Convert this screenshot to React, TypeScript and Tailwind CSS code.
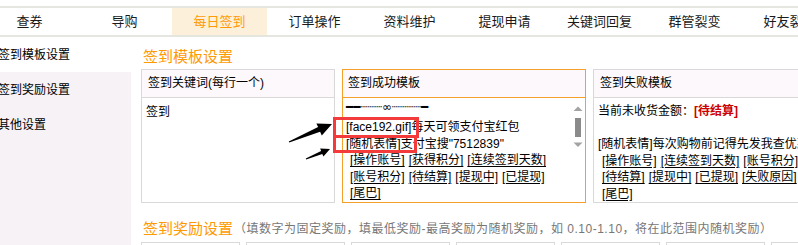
import React from 'react'

const tabs = ['查券', '导购', '每日签到', '订单操作', '资料维护', '提现申请', '关键词回复', '群管裂变', '好友裂变']
const sideItems = ['签到模板设置', '签到奖励设置', '其他设置']

function Tag({ children }: { children: React.ReactNode }) {
  return <span className="underline underline-offset-[2px] decoration-1">{children}</span>
}

// Textarea scrollbar drawing
function ScrollBar() {
  return (
    <svg className="absolute left-[229px] top-[6px]" width="12" height="46" viewBox="0 0 12 46">
      <polygon points="1.5,7 6,2.5 10.5,7" fill="#a3a3a3" />
      <rect x="3" y="14" width="6" height="19" fill="#8a8a8a" />
      <polygon points="1.5,38.5 6,43 10.5,38.5" fill="#a3a3a3" />
    </svg>
  )
}

// Black pointer arrows
function Arrows() {
  return (
    <svg className="absolute left-0 top-0 pointer-events-none" width="798" height="245" viewBox="0 0 798 245">
      <polygon
        points="288.8,141.5 318.1,127.1 316.4,123.4 332,124 321.8,135.4 320.1,131.7 289.2,142.6"
        fill="#000"
      />
      <polygon
        points="305.8,158.6 321.1,151.1 320.2,148.6 330,149 323.4,156.4 322.3,153.9 306.2,159.5"
        fill="#000"
      />
    </svg>
  )
}

export default function App() {
  return (
    <div className="relative w-[798px] h-[245px] overflow-hidden bg-white text-[12px] text-black font-['Liberation_Sans','Noto_Sans_CJK_SC',sans-serif]">
      {/* Top tabs */}
      <div className="mt-[6px] flex h-[31px] border-y-2 border-[#e6e6e1] -ml-[18px]">
        {tabs.map((t) => (
          <div
            key={t}
            className={
              t === '每日签到'
                ? 'w-[95px] shrink-0 flex items-center justify-center text-[13px] text-[#ff9a06] bg-[#fdf0da]'
                : 'w-[95px] shrink-0 flex items-center justify-center text-[13px] text-[#1a1a1a]'
            }
          >
            {t}
          </div>
        ))}
      </div>

      <div className="flex">
        {/* Sidebar */}
        <div className="w-[131px] h-[208px] shrink-0 bg-[#f6f2f6]">
          {sideItems.map((s, i) => (
            <div
              key={s}
              className={i === 0 ? 'h-[35px] flex items-center bg-white' : 'h-[35px] flex items-center'}
            >
              <span className="-ml-[2px] whitespace-nowrap">{s}</span>
            </div>
          ))}
        </div>

        {/* Main */}
        <div className="flex-1 pt-[10px] pl-[10px]">
          <div className="pl-[2px] h-[20px] leading-[20px] text-[15px] text-[#ff9900]">签到模板设置</div>

          <div className="mt-[2px] flex gap-[7px] leading-[16.5px]">
            {/* Col 1 */}
            <div className="w-[194px] shrink-0 border border-[#d9d9d9]">
              <div className="h-[28px] flex items-center pl-[6px] bg-[#fcf8fc] border-b border-[#d9d9d9]">
                签到关键词(每行一个)
              </div>
              <div className="h-[104px] pl-[4px] pt-[6px]">签到</div>
            </div>

            {/* Col 2 */}
            <div className="w-[244px] shrink-0 border border-[#f5a02a]">
              <div className="h-[28px] flex items-center pl-[5px] bg-[#fcf8fc] border-b border-[#f5a02a]">
                签到成功模板
              </div>
              <div className="relative h-[104px] pl-[3px] pt-[1px] whitespace-nowrap">
                <div className="h-[16px] leading-[16px] font-['DejaVu_Sans',sans-serif] text-[12px]">━━┈┈┈∞┈┈┈┈━</div>
                <div className="mt-[4px]">[face192.gif]每天可领支付宝红包</div>
                <div>[随机表情]支付宝搜"7512839"</div>
                <div className="pl-[4px] flex gap-[4px]">
                  <Tag>[操作账号]</Tag>
                  <Tag>[获得积分]</Tag>
                  <Tag>[连续签到天数]</Tag>
                </div>
                <div className="pl-[4px] flex gap-[4px]">
                  <Tag>[账号积分]</Tag>
                  <Tag>[待结算]</Tag>
                  <Tag>[提现中]</Tag>
                  <Tag>[已提现]</Tag>
                </div>
                <div className="pl-[4px]">
                  <Tag>[尾巴]</Tag>
                </div>
                <ScrollBar />
              </div>
            </div>

            {/* Col 3 */}
            <div className="w-[244px] shrink-0 border border-[#d9d9d9]">
              <div className="h-[28px] flex items-center pl-[6px] bg-[#fcf8fc] border-b border-[#d9d9d9]">
                签到失败模板
              </div>
              <div className="h-[104px] pl-[4px] pt-[5px] whitespace-nowrap">
                <div>
                  当前未收货金额：<span className="font-bold text-[#cc0000]">[待结算]</span>
                </div>
                <div className="h-[16.5px]" />
                <div>[随机表情]每次购物前记得先发我查优惠券哦</div>
                <div className="pl-[4px] flex gap-[4px]">
                  <Tag>[操作账号]</Tag>
                  <Tag>[连续签到天数]</Tag>
                  <Tag>[账号积分]</Tag>
                </div>
                <div className="pl-[4px] flex gap-[4px]">
                  <Tag>[待结算]</Tag>
                  <Tag>[提现中]</Tag>
                  <Tag>[已提现]</Tag>
                  <Tag>[失败原因]</Tag>
                </div>
                <div className="pl-[4px]">
                  <Tag>[尾巴]</Tag>
                </div>
              </div>
            </div>
          </div>

          <div className="mt-[16px] pl-[2px] h-[20px] flex items-center whitespace-nowrap">
            <span className="text-[15px] text-[#ff9900]">签到奖励设置</span>
            <span className="ml-[1px] text-[12px] tracking-[0.5px] text-[#777]">
              （填数字为固定奖励，填最低奖励-最高奖励为随机奖励，如 0.10-1.10，将在此范围内随机奖励）
            </span>
          </div>

          <div className="mt-[3px] flex gap-[6px]">
            {[0, 1, 2, 3, 4, 5, 6].map((i) => (
              <div key={i} className="w-[99px] h-[10px] shrink-0 border border-[#d9d9d9]" />
            ))}
          </div>
        </div>
      </div>

      {/* Annotations */}
      <div className="absolute left-[333px] top-[117px] w-[86px] h-[21px] border-[3px] border-[#f43b3b]" />
      <div className="absolute left-[333px] top-[135px] w-[84px] h-[18px] border-[3px] border-[#f43b3b]" />
      <Arrows />
    </div>
  )
}
